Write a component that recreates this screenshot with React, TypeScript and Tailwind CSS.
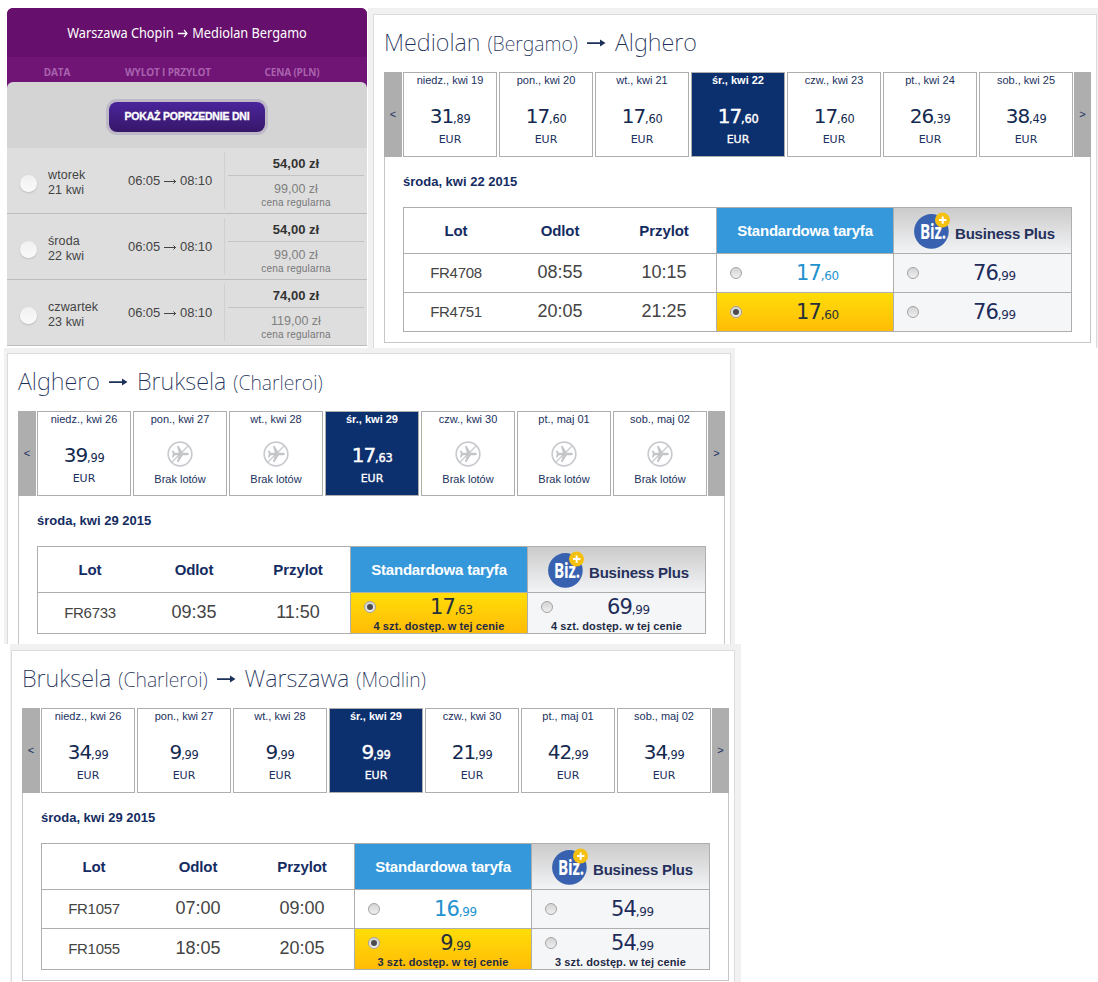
import { Fragment } from "react";

type Day = { label: string; price?: string; active?: boolean };
type Fare = { price: string; note?: string; selected?: boolean };
type Flight = { no: string; departs: string; arrives: string; standard: Fare; business: Fare };
type Place = { city: string; airport?: string };

const cheapFares = [
  { day: "wtorek", date: "21 kwi", price: "54,00 zł", regular: "99,00 zł" },
  { day: "środa", date: "22 kwi", price: "54,00 zł", regular: "99,00 zł" },
  { day: "czwartek", date: "23 kwi", price: "74,00 zł", regular: "119,00 zł" },
];

const algheroDays: Day[] = [
  { label: "niedz., kwi 19", price: "31,89" },
  { label: "pon., kwi 20", price: "17,60" },
  { label: "wt., kwi 21", price: "17,60" },
  { label: "śr., kwi 22", price: "17,60", active: true },
  { label: "czw., kwi 23", price: "17,60" },
  { label: "pt., kwi 24", price: "26,39" },
  { label: "sob., kwi 25", price: "38,49" },
];

const brusselsDays: Day[] = [
  { label: "niedz., kwi 26", price: "39,99" },
  { label: "pon., kwi 27" },
  { label: "wt., kwi 28" },
  { label: "śr., kwi 29", price: "17,63", active: true },
  { label: "czw., kwi 30" },
  { label: "pt., maj 01" },
  { label: "sob., maj 02" },
];

const warsawDays: Day[] = [
  { label: "niedz., kwi 26", price: "34,99" },
  { label: "pon., kwi 27", price: "9,99" },
  { label: "wt., kwi 28", price: "9,99" },
  { label: "śr., kwi 29", price: "9,99", active: true },
  { label: "czw., kwi 30", price: "21,99" },
  { label: "pt., maj 01", price: "42,99" },
  { label: "sob., maj 02", price: "34,99" },
];

const algheroFlights: Flight[] = [
  { no: "FR4708", departs: "08:55", arrives: "10:15", standard: { price: "17,60" }, business: { price: "76,99" } },
  { no: "FR4751", departs: "20:05", arrives: "21:25", standard: { price: "17,60", selected: true }, business: { price: "76,99" } },
];

const brusselsFlights: Flight[] = [
  {
    no: "FR6733",
    departs: "09:35",
    arrives: "11:50",
    standard: { price: "17,63", selected: true, note: "4 szt. dostęp. w tej cenie" },
    business: { price: "69,99", note: "4 szt. dostęp. w tej cenie" },
  },
];

const warsawFlights: Flight[] = [
  { no: "FR1057", departs: "07:00", arrives: "09:00", standard: { price: "16,99" }, business: { price: "54,99" } },
  {
    no: "FR1055",
    departs: "18:05",
    arrives: "20:05",
    standard: { price: "9,99", selected: true, note: "3 szt. dostęp. w tej cenie" },
    business: { price: "54,99", note: "3 szt. dostęp. w tej cenie" },
  },
];

function Price({ value, className }: { value: string; className: string }) {
  const [whole, cents] = value.split(",");
  return (
    <div className={`flex items-baseline font-['DejaVu_Sans',sans-serif] leading-6 tracking-[-1px] whitespace-nowrap ${className}`}>
      <span>{whole}</span>
      <span className="text-[0.57em] tracking-[-0.3px]">,{cents}</span>
    </div>
  );
}

function NoFlightsIcon() {
  return (
    <svg width="26" height="26" viewBox="0 0 26 26" fill="none">
      <circle cx="13" cy="13" r="11.8" stroke="#c9cbcf" strokeWidth="1.7" />
      <path d="M4.7 21.3 21.3 4.7" stroke="#c9cbcf" strokeWidth="1.3" />
      <path
        d="M22 13c0-.8-1.2-1.3-2.6-1.3h-3.5L11.6 5H9.8l2 6.7H7.9L6.2 9.6H4.9L5.8 13l-.9 3.4h1.3l1.7-2.1h3.9l-2 6.7h1.8l4.3-6.7h3.5c1.4 0 2.6-.5 2.6-1.3Z"
        fill="#c4c6ca"
      />
    </svg>
  );
}

function BizLogo() {
  return (
    <svg width="36" height="38" viewBox="0 0 36 38" className="overflow-visible">
      <circle cx="17.4" cy="19.4" r="17.3" fill="#3862b0" />
      <text
        x="6"
        y="26.5"
        textLength="26"
        lengthAdjust="spacingAndGlyphs"
        fill="#fff"
        fontFamily="Open Sans, sans-serif"
        fontWeight="700"
        fontSize="20.5"
      >
        Biz.
      </text>
      <circle cx="28.5" cy="8" r="7.5" fill="#f5c010" />
      <path d="M28.7 4.4v7.4M25 8.1h7.4" stroke="#fff" strokeWidth="2" />
    </svg>
  );
}

function Radio({ checked }: { checked?: boolean }) {
  return (
    <span className="flex size-3 shrink-0 items-center justify-center rounded-full border border-[#a3a3a3] bg-linear-to-b from-[#d4d4d4] to-[#efefef]">
      {checked && <span className="size-1.5 rounded-full bg-[#4d4d4d]" />}
    </span>
  );
}

function DayCell({ day }: { day: Day }) {
  const tone = day.active ? "bg-[#0c2f6e] font-bold text-white" : "bg-white text-[#1b3160]";
  return (
    <div className={`flex h-[85px] w-[94px] flex-col items-center border border-[#aeaeae] text-[11px] ${tone}`}>
      <span className="leading-[15px] whitespace-nowrap">{day.label}</span>
      {day.price ? (
        <>
          <Price
            value={day.price}
            className={`mt-4 text-[20px] font-normal ${day.active ? "[-webkit-text-stroke:0.4px_white]" : "text-[#13294f]"}`}
          />
          <span
            className={`mt-px font-['DejaVu_Sans',sans-serif] text-[11px] leading-4 font-normal ${day.active ? "[-webkit-text-stroke:0.3px_white]" : ""}`}
          >
            EUR
          </span>
        </>
      ) : (
        <>
          <span className="mt-[14px]">
            <NoFlightsIcon />
          </span>
          <span className="mt-1 leading-4 whitespace-nowrap">Brak lotów</span>
        </>
      )}
    </div>
  );
}

function FareCell({ fare, tone }: { fare: Fare; tone: string }) {
  return (
    <div className={`flex flex-col border-t border-l border-[#aeaeae] ${tone}`}>
      <div className={`flex items-center pl-[13px] ${fare.note ? "h-[28px]" : "h-[38px]"}`}>
        <Radio checked={fare.selected} />
        <Price value={fare.price} className="w-[151px] justify-center pt-[3px] text-[21px]" />
      </div>
      {fare.note && (
        <span className="-mt-px text-center text-[11px] leading-3 font-bold tracking-[0.1px] whitespace-nowrap text-[#1f2a44]">
          {fare.note}
        </span>
      )}
    </div>
  );
}

function FlightTable({ flights }: { flights: Flight[] }) {
  return (
    <div className="grid w-[669px] grid-cols-[104px_104px_104px_177px_178px] border border-[#aeaeae] text-[#444]">
      {["Lot", "Odlot", "Przylot"].map((name) => (
        <div key={name} className="flex h-[45px] items-center justify-center pt-0.5 text-[15px] font-bold tracking-[-0.1px] text-[#142c62]">
          {name}
        </div>
      ))}
      <div className="flex items-center justify-center border-l border-[#aeaeae] bg-[#3498db] pt-0.5 text-[15px] font-bold tracking-[-0.2px] text-white">
        Standardowa taryfa
      </div>
      <div className="flex border-l border-[#aeaeae] bg-linear-to-b from-[#cbcbcb] to-[#f3f4f6] pl-5 text-[15px] font-bold tracking-[-0.2px] text-[#26305c]">
        <span className="mt-1">
          <BizLogo />
        </span>
        <span className="mt-[15px] ml-[5px] whitespace-nowrap">Business Plus</span>
      </div>
      {flights.map((flight) => {
        const height = flight.standard.note ? "h-[41px]" : "h-[39px]";
        return (
          <Fragment key={flight.no}>
            <div className={`flex items-center justify-center border-t border-[#aeaeae] text-[15px] tracking-[-0.3px] ${height}`}>{flight.no}</div>
            <div className={`flex items-center justify-center border-t border-[#aeaeae] pb-0.5 text-[18px] ${height}`}>{flight.departs}</div>
            <div className={`flex items-center justify-center border-t border-[#aeaeae] pb-0.5 text-[18px] ${height}`}>{flight.arrives}</div>
            <FareCell
              fare={flight.standard}
              tone={flight.standard.selected ? "bg-linear-to-b from-[#ffdd08] to-[#ffbc06] text-[#26303c]" : "text-[#2292cf]"}
            />
            <FareCell fare={flight.business} tone="bg-[#f5f6f8] text-[#1f2c5a]" />
          </Fragment>
        );
      })}
    </div>
  );
}

function PlaceName({ place }: { place: Place }) {
  return (
    <span className="flex items-baseline gap-[7px]">
      <span>{place.city}</span>
      {place.airport && <span className="text-[19.5px]">({place.airport})</span>}
    </span>
  );
}

type FlightPanelProps = {
  from: Place;
  to: Place;
  days: Day[];
  date: string;
  flights: Flight[];
  frame: string;
};

function FlightPanel({ from, to, days, date, flights, frame }: FlightPanelProps) {
  return (
    <section className={`shrink-0 overflow-hidden bg-[#f1f1f1] ${frame}`}>
      <div className="h-full w-[724px] border border-b-0 border-[#dcdcdc] bg-white pr-[5px] pl-2.5">
        <h2 className="flex h-[57px] items-center gap-[9px] pb-0.5 font-['Noto_Sans',sans-serif] text-[23.5px] font-extralight whitespace-nowrap text-[#1d3158] [font-kerning:none]">
          <PlaceName place={from} />
          <svg width="19" height="8" viewBox="0 0 19 8">
            <path d="M0 3.2h13V.6L18.5 4 13 7.4V4.9H0z" fill="#1d3158" />
          </svg>
          <PlaceName place={to} />
        </h2>
        <div className="border border-t-0 border-[#c6c6c6] pb-2.5">
          <div className="-mx-px flex">
            <button className="mr-px w-[18px] bg-[#aeaeae] text-[11px] text-[#1b3160]">&lt;</button>
            <div className="flex gap-0.5">
              {days.map((day) => (
                <DayCell key={day.label} day={day} />
              ))}
            </div>
            <button className="ml-px w-[17px] bg-[#aeaeae] text-[11px] text-[#1b3160]">&gt;</button>
          </div>
          <div className="px-[18px]">
            <h3 className="flex h-[50px] items-center text-[13px] font-bold text-[#142c62]">{date}</h3>
            <FlightTable flights={flights} />
          </div>
        </div>
      </div>
    </section>
  );
}

function CheapFares() {
  return (
    <section className="h-[338px] w-[360px] overflow-hidden rounded-t-md bg-[#701576]">
      <h1 className="flex h-[49px] items-center justify-center bg-[#660f6c] font-['Noto_Sans',sans-serif] text-[15px] whitespace-nowrap text-white">
        <span className="flex scale-x-[0.85] items-center gap-[5px]">
          Warszawa Chopin
          <svg width="12" height="9" viewBox="0 0 12 9" fill="none" stroke="#fff" strokeWidth="1.4" className="mt-0.5">
            <path d="M0 4.5h11M7.5 1 11 4.5 7.5 8" />
          </svg>
          Mediolan Bergamo
        </span>
      </h1>
      <div className="grid h-[25px] grid-cols-[100px_122px_126px] pt-1.5 text-center font-['Open_Sans',sans-serif] text-[10px] leading-[18px] font-bold tracking-[-0.15px] text-[#a963ae]">
        <span>DATA</span>
        <span>WYLOT I PRZYLOT</span>
        <span>CENA (PLN)</span>
      </div>
      <div className="rounded-t-md bg-[#d4d4d4]">
        <div className="flex h-[66px] items-center justify-center pt-1">
          <button className="h-[30px] w-[156px] rounded-lg bg-linear-to-b from-[#4a259c] to-[#361769] text-[10.5px] font-bold tracking-[-0.2px] whitespace-nowrap text-white ring-3 ring-[#bdb9c6] [-webkit-text-stroke:0.3px_white]">
            POKAŻ POPRZEDNIE DNI
          </button>
        </div>
        {cheapFares.map((fare) => (
          <div key={fare.date} className="flex h-[66px] border-b border-[#bcbcbc] bg-[#dedede] text-[12px] text-[#444]">
            <div className="flex w-[107px] pl-[13px]">
              <span className="mt-[27px] size-[17px] rounded-full bg-linear-to-b from-[#f0f0f0] to-[#fafafa] shadow-[0_1px_2px_#bbb]" />
              <div className="mt-5 ml-[11px] text-[12.5px] leading-[15px] tracking-[0.1px]">
                <div>{fare.day}</div>
                <div>{fare.date}</div>
              </div>
            </div>
            <div className="my-1 flex w-[111px] border-r border-[#d0d0d0] pt-5 pl-3.5">
              <div className="flex h-[18px] items-center gap-[3.5px] text-[13px] tracking-[-0.1px] whitespace-nowrap">
                <span>06:05</span>
                <svg width="13" height="7" viewBox="0 0 13 7" fill="none" stroke="#444">
                  <path d="M0 3.5h12M9.5 1.5l2 2-2 2" />
                </svg>
                <span>08:10</span>
              </div>
            </div>
            <div className="ml-[3px] flex w-[136px] flex-col text-center">
              <div className="h-7 border-b border-[#c4c4c4] pt-2 text-[13px] leading-4 font-bold text-[#333]">{fare.price}</div>
              <div className="mt-[5px] text-[12.5px] leading-4 text-[#808080]">{fare.regular}</div>
              <div className="text-[10px] leading-[11px] tracking-[0.2px] text-[#777]">cena regularna</div>
            </div>
          </div>
        ))}
      </div>
    </section>
  );
}

export default function App() {
  return (
    <main className="h-[982px] w-[1098px] overflow-hidden bg-white font-['Liberation_Sans',Arial,sans-serif]">
      <div className="flex h-[348px] gap-px pt-2 pl-[7px]">
        <CheapFares />
        <FlightPanel
          from={{ city: "Mediolan", airport: "Bergamo" }}
          to={{ city: "Alghero" }}
          days={algheroDays}
          date="środa, kwi 22 2015"
          flights={algheroFlights}
          frame="h-[340px] w-[730px] pt-1.5 pl-[5px]"
        />
      </div>
      <FlightPanel
        from={{ city: "Alghero" }}
        to={{ city: "Bruksela", airport: "Charleroi" }}
        days={brusselsDays}
        date="środa, kwi 29 2015"
        flights={brusselsFlights}
        frame="ml-1 h-[296px] w-[731px] pt-[5px] pl-[3px]"
      />
      <FlightPanel
        from={{ city: "Bruksela", airport: "Charleroi" }}
        to={{ city: "Warszawa", airport: "Modlin" }}
        days={warsawDays}
        date="środa, kwi 29 2015"
        flights={warsawFlights}
        frame="ml-2.5 h-[338px] w-[731px] pt-1.5 pl-px"
      />
    </main>
  );
}
